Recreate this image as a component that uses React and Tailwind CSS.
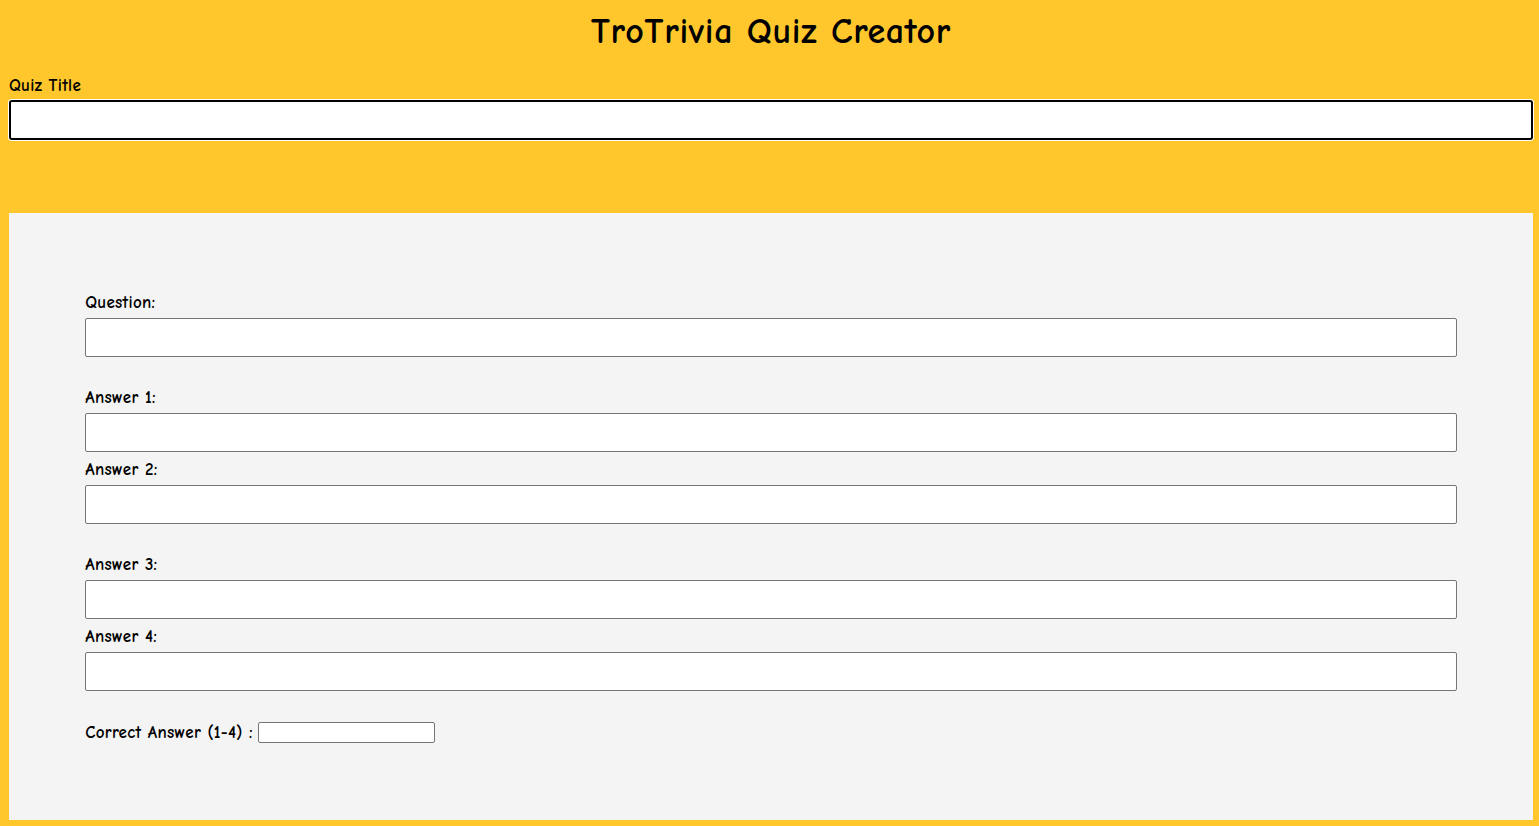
import React from "react";

const font = { fontFamily: '"Comic Sans MS", "Comic Neue", "DejaVu Sans", sans-serif' };

function Field({ label, className = "" }) {
  return (
    <div className={className}>
      <label className="block pt-[1px] text-[17px] font-bold tracking-[0.3px] leading-[18px] text-black mb-[6px]">
        {label}
      </label>
      <input
        type="text"
        className="block w-full h-[39px] bg-white border border-[#767676] rounded-[2px] px-2 outline-none"
      />
    </div>
  );
}

export default function App() {
  return (
    <div className="h-screen overflow-hidden bg-[#FFC72C] pl-[9px] pr-[6px]" style={font}>
      {/* header */}
      <h1 className="pt-[13px] h-[60px] text-center text-[36px] tracking-[0.7px] leading-[38px] font-bold text-black">
        TroTrivia Quiz Creator
      </h1>
      <label className="block mt-[17px] text-[17px] font-bold tracking-[0.3px] leading-[18px] text-black">
        Quiz Title
      </label>
      <div className="mt-[5px]">
        <input
          type="text"
          className="block w-full h-[40px] bg-white border-2 border-black rounded-[3px] ring-1 ring-white outline-none px-2"
        />
      </div>

      {/* question card */}
      <div className="mt-[73px] bg-[#F4F4F4] h-[607px] pt-[80px]">
        <div className="w-[90%] mx-auto">
          <Field label="Question:" />
          <Field label="Answer 1:" className="mt-[31px]" />
          <Field label="Answer 2:" className="mt-[8px]" />
          <Field label="Answer 3:" className="mt-[31px]" />
          <Field label="Answer 4:" className="mt-[8px]" />
          <div className="mt-[31px] flex items-center gap-[5px]">
            <label className="text-[17px] font-bold tracking-[0.3px] leading-[18px] text-black">
              Correct Answer (1-4) :
            </label>
            <input
              type="text"
              className="w-[177px] h-[21px] bg-white border border-[#767676] rounded-[2px] outline-none px-1"
            />
          </div>
        </div>
      </div>
    </div>
  );
}
